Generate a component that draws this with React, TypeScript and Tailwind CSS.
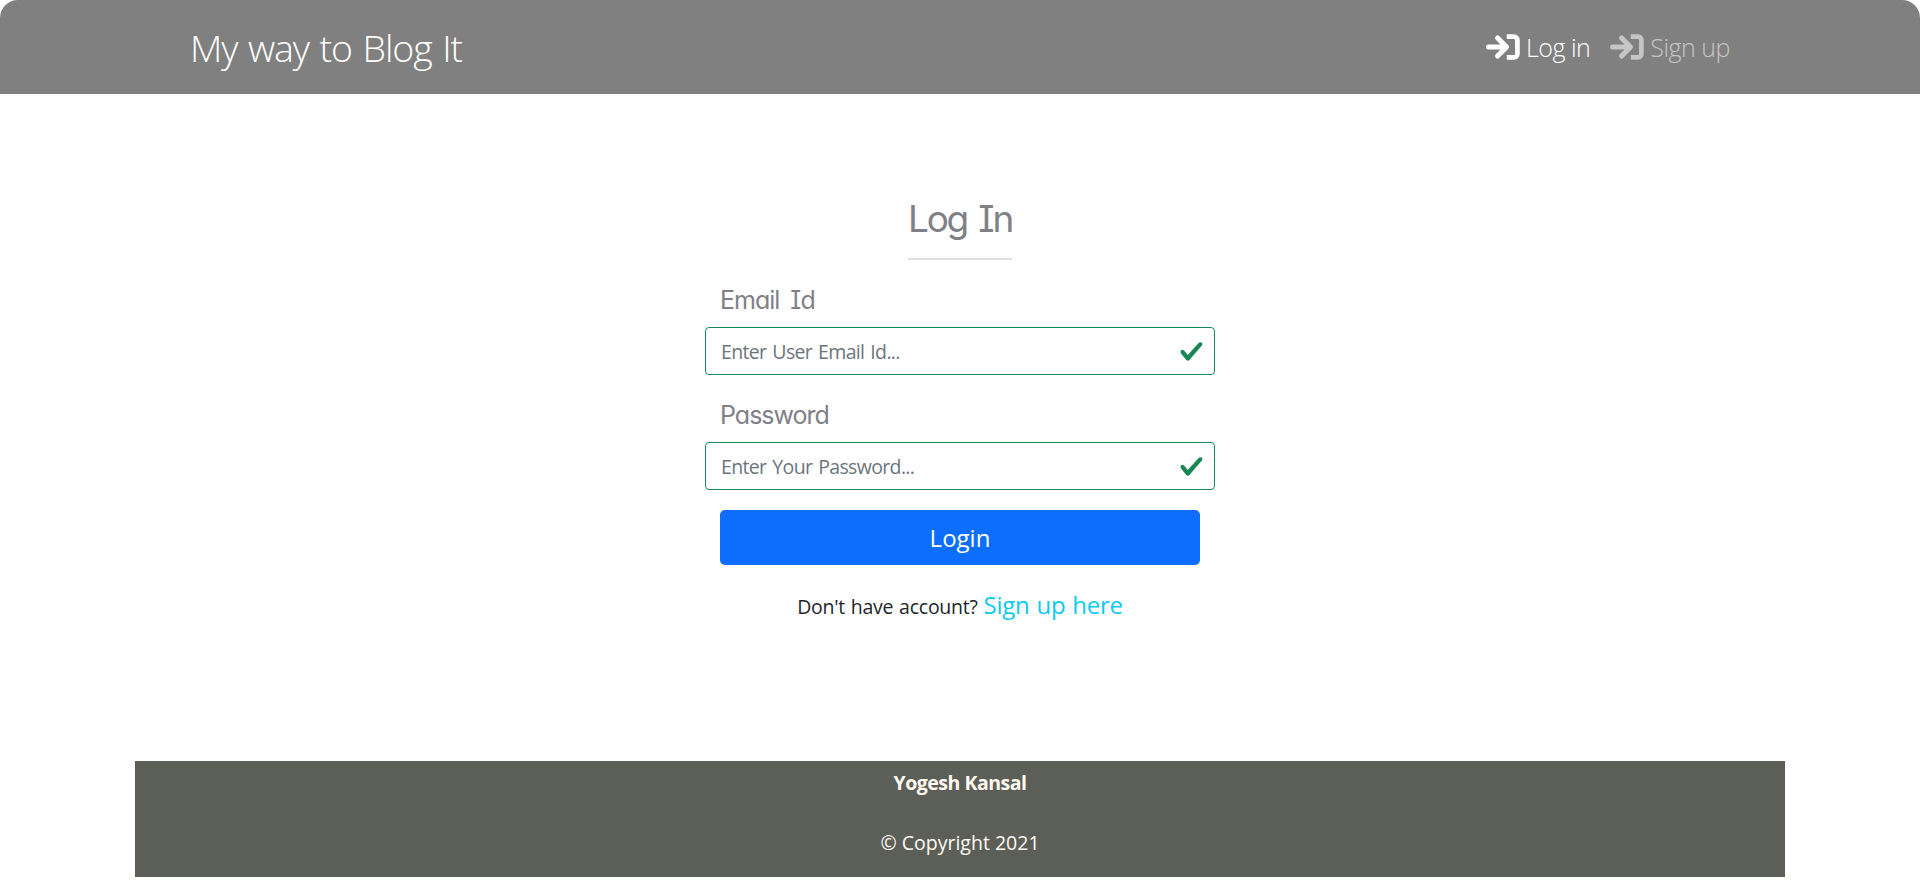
import type { ReactNode } from "react";

function SignInIcon() {
  return (
    <svg width="34" height="26" viewBox="0 0 34 26" className="mr-1.5 shrink-0" fill="none" stroke="currentColor" aria-hidden="true">
      <path d="M2.6 13H20M11.6 4l8.9 9-8.9 9" strokeWidth="5.1" strokeLinecap="round" strokeLinejoin="round" />
      <path d="M20.8 2.6H28a3.4 3.4 0 0 1 3.4 3.4v14a3.4 3.4 0 0 1-3.4 3.4h-7.2" strokeWidth="4.7" />
    </svg>
  );
}

function NavLink({ children, active }: { children: ReactNode; active?: boolean }) {
  return (
    <a href="#" className={active ? "flex items-center text-white" : "flex items-center text-[#c5c5c5]"}>
      <SignInIcon />
      <span className="pt-0.5">{children}</span>
    </a>
  );
}

function Field({ label, placeholder, type }: { label: string; placeholder: string; type: string }) {
  return (
    <label className="block">
      <span className="mb-[11px] block pl-[15px] font-['Inter'] text-[25px] leading-[31px] tracking-[-1px] text-[#808087] [font-feature-settings:'cv08','cv11'] [word-spacing:5px]">
        {label}
      </span>
      <span className="flex h-12 items-center rounded-[4px] border border-[#198754] pr-2.5 pl-[15px]">
        <input type={type} placeholder={placeholder} className="min-w-0 flex-1 pt-px text-[19.5px] tracking-[-0.65px] outline-none [word-spacing:1.5px] placeholder:text-[#6c757d]" />
        <svg width="25" height="25" viewBox="0 0 8 8" fill="#198754" aria-hidden="true">
          <path d="M2.3 6.73L.6 4.53c-.4-1.04.46-1.4 1.1-.8l1.1 1.4 3.4-3.8c.6-.63 1.6-.27 1.2.7l-4 4.6c-.43.5-.8.4-1.1.1z" />
        </svg>
      </span>
    </label>
  );
}

export default function App() {
  return (
    <div className="flex h-[881px] flex-col bg-white font-['Open_Sans',sans-serif] text-[#212529]">
      <nav className="flex h-[94px] shrink-0 items-center justify-between rounded-t-[18px] bg-[#808080] px-[190px] font-light">
        <a href="#" className="pt-0.5 text-[37.5px] tracking-[-1.1px] text-white [word-spacing:2px]">My way to Blog It</a>
        <div className="flex items-center gap-5 text-[25px] tracking-[-0.5px]">
          <NavLink active>Log in</NavLink>
          <NavLink>Sign up</NavLink>
        </div>
      </nav>
      <main className="mx-auto flex h-[667px] w-[510px] shrink-0 flex-col pt-[90px]">
        <h1 className="mx-auto flex h-[76px] items-center border-b-2 border-[#e0e0e0] pb-1 font-['Inter'] text-[37px] tracking-[-2.2px] text-[#808087] [font-feature-settings:'cv08','cv11'] [word-spacing:3px]">
          Log In
        </h1>
        <form className="mt-[25px] flex flex-col" onSubmit={(event) => event.preventDefault()}>
          <div className="flex flex-col gap-[25px]">
            <Field label="Email Id" placeholder="Enter User Email Id..." type="email" />
            <Field label="Password" placeholder="Enter Your Password..." type="password" />
          </div>
          <button className="mx-auto mt-5 h-[55px] w-[480px] rounded-[5px] bg-[#0d6efd] text-[24px] text-white">Login</button>
        </form>
        <p className="mt-[22px] text-center text-[19.5px] tracking-[-0.25px] [word-spacing:1px]">
          Don't have account? <a href="#" className="text-[24px] text-[#0dcaf0]">Sign up here</a>
        </p>
      </main>
      <footer className="mx-auto flex h-[116px] w-[1650px] shrink-0 flex-col items-center bg-[#5c5f58] text-[19.5px] text-[#fffaf0]">
        <strong className="mt-2 leading-7 tracking-[-0.5px]">Yogesh Kansal</strong>
        <span className="mt-8 leading-7">© Copyright 2021</span>
      </footer>
    </div>
  );
}
